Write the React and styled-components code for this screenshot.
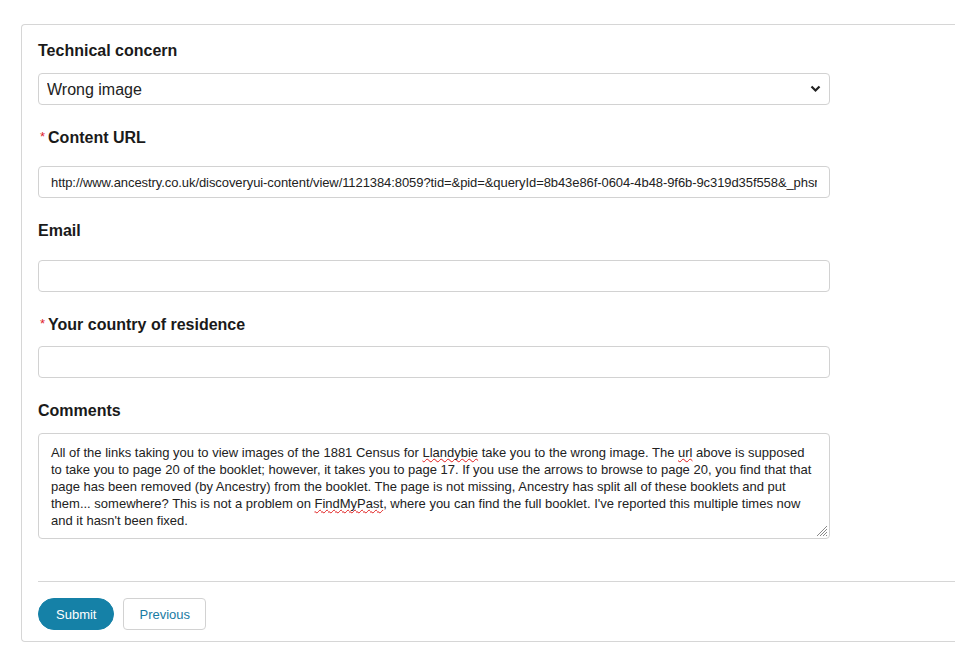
import React from "react";
import styled, { createGlobalStyle } from "styled-components";

const GlobalStyle = createGlobalStyle`
  html, body {
    margin: 0;
    padding: 0;
    background: #fff;
    overflow: hidden;
  }
  body {
    font-family: "Liberation Sans", Arial, sans-serif;
    color: #1f1f1f;
  }
  * {
    box-sizing: border-box;
  }
`;

const Page = styled.div`
  padding: 24px 0 0 21px;
`;

const Panel = styled.form`
  border: 1px solid #d6d6d6;
  border-right: none;
  border-radius: 4px 0 0 4px;
  padding: 15px 0 11px 16px;
`;

const Fields = styled.div`
  width: 792px;
  display: flex;
  flex-direction: column;
  gap: 22px;
`;

const Field = styled.div`
  display: flex;
  flex-direction: column;
`;

const Label = styled.label`
  display: block;
  height: 20px;
  padding-top: 1px;
  font-size: 16px;
  line-height: 20px;
  font-weight: 700;
  color: #1a1a1a;
  margin-bottom: ${(p) => p.$gap}px;
`;

const Required = styled.span`
  position: relative;
  top: -2px;
  color: #e0212b;
  font-size: 13px;
  line-height: 1;
  font-weight: 400;
  margin: 0 3px 0 2px;
`;

const SelectWrap = styled.div`
  position: relative;
`;

const Select = styled.select`
  display: block;
  appearance: none;
  width: 100%;
  height: 32px;
  border: 1px solid #d2d2d2;
  border-radius: 4px;
  background: #fff;
  padding: 0 30px 0 8px;
  font-family: "Liberation Sans", Arial, sans-serif;
  font-size: 16px;
  color: #222;
`;

const Chevron = styled.svg`
  position: absolute;
  right: 9px;
  top: 12px;
  pointer-events: none;
`;

const Input = styled.input`
  width: 100%;
  height: 32px;
  border: 1px solid #d2d2d2;
  border-radius: 4px;
  background: #fff;
  padding: 0 12px;
  font-family: "Liberation Sans", Arial, sans-serif;
  font-size: 13px;
  letter-spacing: ${(p) => (p.$tight ? "-0.08px" : "0")};
  color: #222;
  outline: none;
`;

const TextBox = styled.div`
  position: relative;
  width: 100%;
  height: 106px;
  border: 1px solid #d2d2d2;
  border-radius: 4px;
  padding: 10px 12px;
  font-size: 13px;
  line-height: 17px;
  color: #222;
`;

const Misspelt = styled.span`
  text-decoration: underline wavy #e01b1b;
  text-decoration-thickness: 1px;
  text-decoration-skip-ink: none;
  text-underline-offset: 1px;
`;

const Grip = styled.svg`
  position: absolute;
  right: 1px;
  bottom: 1px;
`;

const Footer = styled.div`
  margin-top: 42px;
  border-top: 1px solid #d6d6d6;
  padding-top: 16px;
  display: flex;
  gap: 9px;
`;

const Button = styled.button`
  height: 32px;
  font-family: "Liberation Sans", Arial, sans-serif;
  font-size: 13px;
  cursor: pointer;
  padding: 0 ${(p) => (p.$primary ? 17 : 15)}px;
  border-radius: ${(p) => (p.$primary ? "16px" : "4px")};
  border: 1px solid ${(p) => (p.$primary ? "#1581a7" : "#d2d2d2")};
  background: ${(p) => (p.$primary ? "#1581a7" : "#fff")};
  color: ${(p) => (p.$primary ? "#fff" : "#1a7ba3")};
`;

export default function App() {
  return (
    <Page>
      <GlobalStyle />
      <Panel onSubmit={(e) => e.preventDefault()}>
        <Fields>
          <Field>
            <Label $gap={13}>Technical concern</Label>
            <SelectWrap>
              <Select defaultValue="wrong">
                <option value="wrong">Wrong image</option>
              </Select>
              <Chevron width="11" height="8" viewBox="0 0 11 8">
                <path d="M1.5 1.5 L5.5 5.5 L9.5 1.5" fill="none" stroke="#222" strokeWidth="2.2" />
              </Chevron>
            </SelectWrap>
          </Field>
          <Field>
            <Label $gap={19}>
              <Required>*</Required>Content URL
            </Label>
            <Input
              $tight
              readOnly
              value="http://www.ancestry.co.uk/discoveryui-content/view/1121384:8059?tid=&pid=&queryId=8b43e86f-0604-4b48-9f6b-9c319d35f558&_phsrc=abc&_phstart=successSource"
            />
          </Field>
          <Field>
            <Label $gap={20}>Email</Label>
            <Input />
          </Field>
          <Field>
            <Label $gap={12}>
              <Required>*</Required>Your country of residence
            </Label>
            <Input />
          </Field>
          <Field>
            <Label $gap={13}>Comments</Label>
            <TextBox role="textbox">
              All of the links taking you to view images of the 1881 Census for <Misspelt>Llandybie</Misspelt> take you to the wrong image. The <Misspelt>url</Misspelt> above is supposed
              <br />
              to take you to page 20 of the booklet; however, it takes you to page 17. If you use the arrows to browse to page 20, you find that that
              <br />
              page has been removed (by Ancestry) from the booklet. The page is not missing, Ancestry has split all of these booklets and put
              <br />
              them... somewhere? This is not a problem on <Misspelt>FindMyPast</Misspelt>, where you can find the full booklet. I've reported this multiple times now
              <br />
              and it hasn't been fixed.
              <Grip width="14" height="14" viewBox="0 0 14 14">
                <path d="M13 3 L3 13 M13 6 L6 13 M13 9 L9 13 M13 12 L12 13" stroke="#8a8a8a" strokeWidth="1" />
              </Grip>
            </TextBox>
          </Field>
        </Fields>
        <Footer>
          <Button $primary type="submit">Submit</Button>
          <Button type="button">Previous</Button>
        </Footer>
      </Panel>
    </Page>
  );
}
